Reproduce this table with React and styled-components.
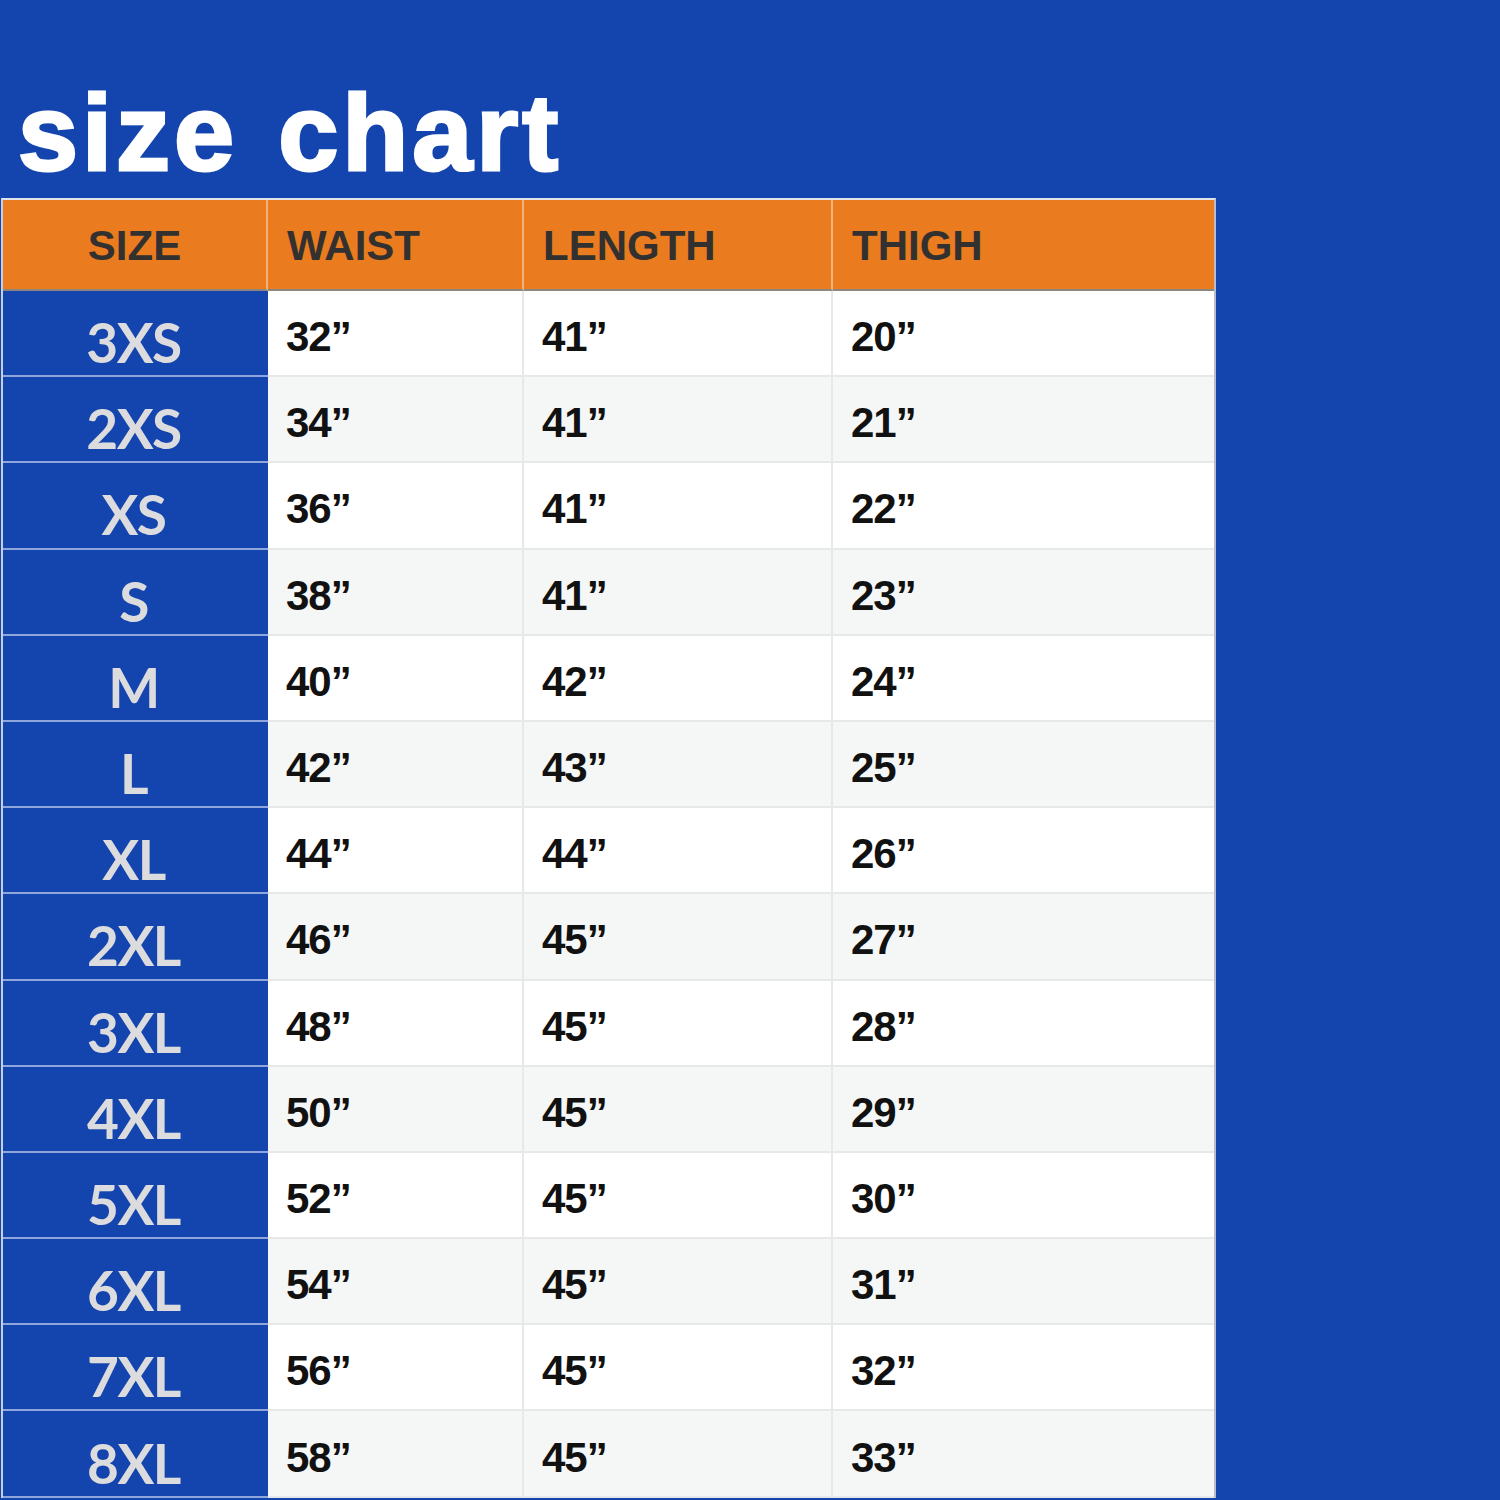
import React from 'react';
import styled, { createGlobalStyle } from 'styled-components';

const GlobalStyle = createGlobalStyle`
    html, body {
        margin: 0;
        padding: 0;
        background: #1445ae;
    }
`

const rows = [
    ['3XS', '32', '41', '20'],
    ['2XS', '34', '41', '21'],
    ['XS', '36', '41', '22'],
    ['S', '38', '41', '23'],
    ['M', '40', '42', '24'],
    ['L', '42', '43', '25'],
    ['XL', '44', '44', '26'],
    ['2XL', '46', '45', '27'],
    ['3XL', '48', '45', '28'],
    ['4XL', '50', '45', '29'],
    ['5XL', '52', '45', '30'],
    ['6XL', '54', '45', '31'],
    ['7XL', '56', '45', '32'],
    ['8XL', '58', '45', '33'],
]

const Page = styled.div`
    width: 1500px;
    height: 1500px;
    overflow: hidden;
    background: #1445ae;
`

const Title = styled.h1`
    margin: 0;
    height: 198px;
    box-sizing: border-box;
    display: flex;
    align-items: flex-end;
    padding: 0 0 11px 18px;
    font-family: "Liberation Sans", Arial, sans-serif;
    font-weight: 900;
    font-size: 108px;
    line-height: 1;
    letter-spacing: 4px;
    word-spacing: 6px;
    color: #ffffff;
    -webkit-text-stroke: 3px #ffffff;
`

const Table = styled.div`
    margin-left: 1px;
    width: 1215px;
    box-sizing: border-box;
    border-top: 2px solid #dfe3ea;
    border-left: 2px solid #c8d0dc;
    border-right: 2px solid #b9bec6;
    display: grid;
    grid-template-columns: 265px 256px 309px 1fr;
    grid-template-rows: 91px;
    grid-auto-rows: 86.2px;
`

const Head = styled.div`
    background: #ea7b1e;
    border-right: ${p => (p.$last ? 'none' : '2px solid #f3b27a')};
    border-bottom: 2px solid #8c8680;
    display: flex;
    align-items: center;
    justify-content: ${p => (p.$center ? 'center' : 'flex-start')};
    padding: 3px 0 0 ${p => (p.$center ? '0' : '19px')};
    font-family: "Liberation Sans", Arial, sans-serif;
    font-weight: 700;
    font-size: 42px;
    letter-spacing: 0;
    color: #333130;
`

const SizeCell = styled.div`
    background: #1445ae;
    border-bottom: 2px solid #8ea6dc;
    display: flex;
    align-items: center;
    justify-content: center;
    padding: 18px 4px 0 0;
    box-sizing: border-box;
    font-family: Lato, "Open Sans", sans-serif;
    font-weight: 700;
    font-size: 55px;
    letter-spacing: -1.5px;
    color: #dcdcde;
`

const Cell = styled.div`
    background: ${p => (p.$alt ? '#f5f6f6' : '#ffffff')};
    border-right: ${p => (p.$last ? 'none' : '2px solid #e6e8ea')};
    border-bottom: 2px solid #e6e8e9;
    display: flex;
    align-items: center;
    padding: 8px 0 0 18px;
    box-sizing: border-box;
    font-family: "Liberation Sans", Arial, sans-serif;
    font-weight: 700;
    font-size: 42px;
    letter-spacing: -1px;
    color: #111111;
`

const App = () => (
    <>
        <GlobalStyle />
        <Page>
            <Title>size chart</Title>
            <Table>
                <Head $center>SIZE</Head>
                <Head>WAIST</Head>
                <Head>LENGTH</Head>
                <Head $last>THIGH</Head>
                {rows.map(([size, waist, length, thigh], i) => (
                    <React.Fragment key={size}>
                        <SizeCell>{size}</SizeCell>
                        <Cell $alt={i % 2 === 1}>{waist}”</Cell>
                        <Cell $alt={i % 2 === 1}>{length}”</Cell>
                        <Cell $alt={i % 2 === 1} $last>{thigh}”</Cell>
                    </React.Fragment>
                ))}
            </Table>
        </Page>
    </>
)

export default App;
